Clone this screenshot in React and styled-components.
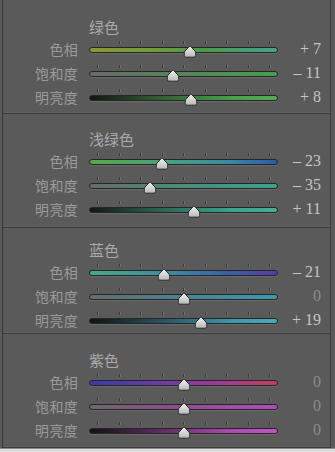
import React from 'react';
import styled, { createGlobalStyle } from 'styled-components';

const GlobalStyle = createGlobalStyle`
  html, body {
    margin: 0;
    padding: 0;
    background: #5a5a5a;
  }
`;

// Panel chrome
const Panel = styled.div`
  width: 335px;
  height: 452px;
  background: #5a5a5a;
  display: flex;
  flex-direction: column;
  font-family: "Noto Sans CJK SC", "Noto Sans", sans-serif;
  overflow: hidden;
`;

const Frame = styled.div`
  margin-left: 2px;
  width: 327px;
  border-left: 1px solid #353535;
  border-right: 1px solid #3a3a3a;
  display: flex;
  flex-direction: column;
`;

const BottomEdge = styled.div`
  flex: 1;
  background: #dcdcdc;
  border-top: 1px solid #8a8a8a;
`;

const Section = styled.section`
  height: ${p => p.$height}px;
  box-sizing: border-box;
  padding-top: ${p => p.$top}px;
  border-bottom: 1px solid #3b3b3b;
  box-shadow: inset 0 -2px 0 -1px #626262;
  display: flex;
  flex-direction: column;
`;

// shared columns: label | slider | value
const Row = styled.div`
  display: grid;
  grid-template-columns: 75px 189px 32px;
  column-gap: 11px;
  align-items: center;
  height: ${p => (p.$head ? 20 : 24)}px;
`;

const Title = styled.div`
  grid-column: 2;
  line-height: 20px;
  font-size: 15px;
  color: #a9a9a9;
`;

const Label = styled.div`
  text-align: right;
  font-size: 14px;
  color: #9b9b9b;
  letter-spacing: 0.3px;
`;

const SliderWrap = styled.div`
  position: relative;
  height: 24px;
  display: flex;
  flex-direction: column;
  justify-content: center;
`;

const Ticks = styled.div`
  display: flex;
  justify-content: space-between;
  padding: 0 8px;
  height: 3px;
  margin-bottom: 3px;
  margin-top: -4px;
`;

const Tick = styled.span`
  width: 1px;
  height: 3px;
  background: #3a3a3a;
  box-shadow: 1px 0 0 #707070;
`;

const Track = styled.div`
  height: 4px;
  border-radius: 3px;
  border: 1px solid #262626;
  background: linear-gradient(to right, ${p => p.$colors.join(', ')});
  box-shadow: 0 1px 0 #6a6a6a;
`;

const Thumb = styled.svg`
  position: absolute;
  top: 8px;
  width: 13px;
  height: 13px;
  transform: translateX(-6.5px);
`;

const Value = styled.div`
  text-align: right;
  font-family: "Liberation Serif", "Noto Sans CJK SC", serif;
  font-size: 16px;
  color: ${p => (p.$zero ? '#8a8a8a' : '#c4c4c4')};
  white-space: pre;
`;

const sections = [
  {
    title: '绿色',
    height: 114,
    top: 17,
    rows: [
      { label: '色相', value: 7, colors: ['#8f9638', '#6f9c3e 35%', '#4a9a48 60%', '#46a28e'] },
      { label: '饱和度', value: -11, colors: ['#6a6a6a', '#5a7f5c 40%', '#45a04f'] },
      { label: '明亮度', value: 8, colors: ['#151515', '#2f5a30 35%', '#45a048 75%', '#52ad57'] },
    ],
  },
  {
    title: '浅绿色',
    height: 114,
    top: 15,
    rows: [
      { label: '色相', value: -23, colors: ['#58a844', '#46a080 45%', '#3a87a6 75%', '#2b5aa8'] },
      { label: '饱和度', value: -35, colors: ['#6a6a6a', '#4e8778 40%', '#3aa38c'] },
      { label: '明亮度', value: 11, colors: ['#151515', '#285f52 35%', '#3aa38a 75%', '#48ae96'] },
    ],
  },
  {
    title: '蓝色',
    height: 106,
    top: 12,
    rows: [
      { label: '色相', value: -21, colors: ['#47aa86', '#3c8ea0 40%', '#3a5ea8 75%', '#5a3aa6'] },
      { label: '饱和度', value: 0, colors: ['#6a6a6a', '#4e7f8c 40%', '#3a9ab0'] },
      { label: '明亮度', value: 19, colors: ['#121212', '#264e5a 35%', '#3b97aa 75%', '#48aac0'] },
    ],
  },
  {
    title: '紫色',
    height: 114,
    top: 16,
    rows: [
      { label: '色相', value: 0, colors: ['#3a3aa6', '#6a3aa8 35%', '#9a3a9e 65%', '#c0405e'] },
      { label: '饱和度', value: 0, colors: ['#6a6a6a', '#8a4e8c 40%', '#b04cbc'] },
      { label: '明亮度', value: 0, colors: ['#121212', '#5a2a5c 35%', '#ad48b0 75%', '#c455c6'] },
    ],
  },
];

const formatValue = v => {
  if (v === 0) return '0';
  return v > 0 ? `+ ${v}` : `– ${Math.abs(v)}`;
};

const SliderThumb = ({ pos }) => (
  <Thumb viewBox="0 0 13 13" style={{ left: `${pos * 100}%` }}>
    <defs>
      <linearGradient id="thumbFill" x1="0" y1="0" x2="0" y2="1">
        <stop offset="0" stopColor="#f4f4f4" />
        <stop offset="1" stopColor="#b8b8b8" />
      </linearGradient>
    </defs>
    <path
      d="M6.5 0.8 L11.6 6.2 Q12.2 7 12.2 8 L12.2 10.6 Q12.2 12.2 10.6 12.2 L2.4 12.2 Q0.8 12.2 0.8 10.6 L0.8 8 Q0.8 7 1.4 6.2 Z"
      fill="url(#thumbFill)"
      stroke="#2a2a2a"
      strokeWidth="1"
    />
  </Thumb>
);

const SliderRow = ({ label, value, colors }) => (
  <Row>
    <Label>{label}</Label>
    <SliderWrap>
      <Ticks>
        {Array.from({ length: 9 }).map((_, i) => (
          <Tick key={i} />
        ))}
      </Ticks>
      <Track $colors={colors} />
      <SliderThumb pos={(value + 100) / 200} />
    </SliderWrap>
    <Value $zero={value === 0}>{formatValue(value)}</Value>
  </Row>
);

const App = () => (
  <>
    <GlobalStyle />
    <Panel>
      <Frame>
        {sections.map(s => (
          <Section key={s.title} $height={s.height} $top={s.top}>
            <Row $head>
              <Title>{s.title}</Title>
            </Row>
            {s.rows.map(r => (
              <SliderRow key={r.label} {...r} />
            ))}
          </Section>
        ))}
      </Frame>
      <BottomEdge />
    </Panel>
  </>
);

export default App;
